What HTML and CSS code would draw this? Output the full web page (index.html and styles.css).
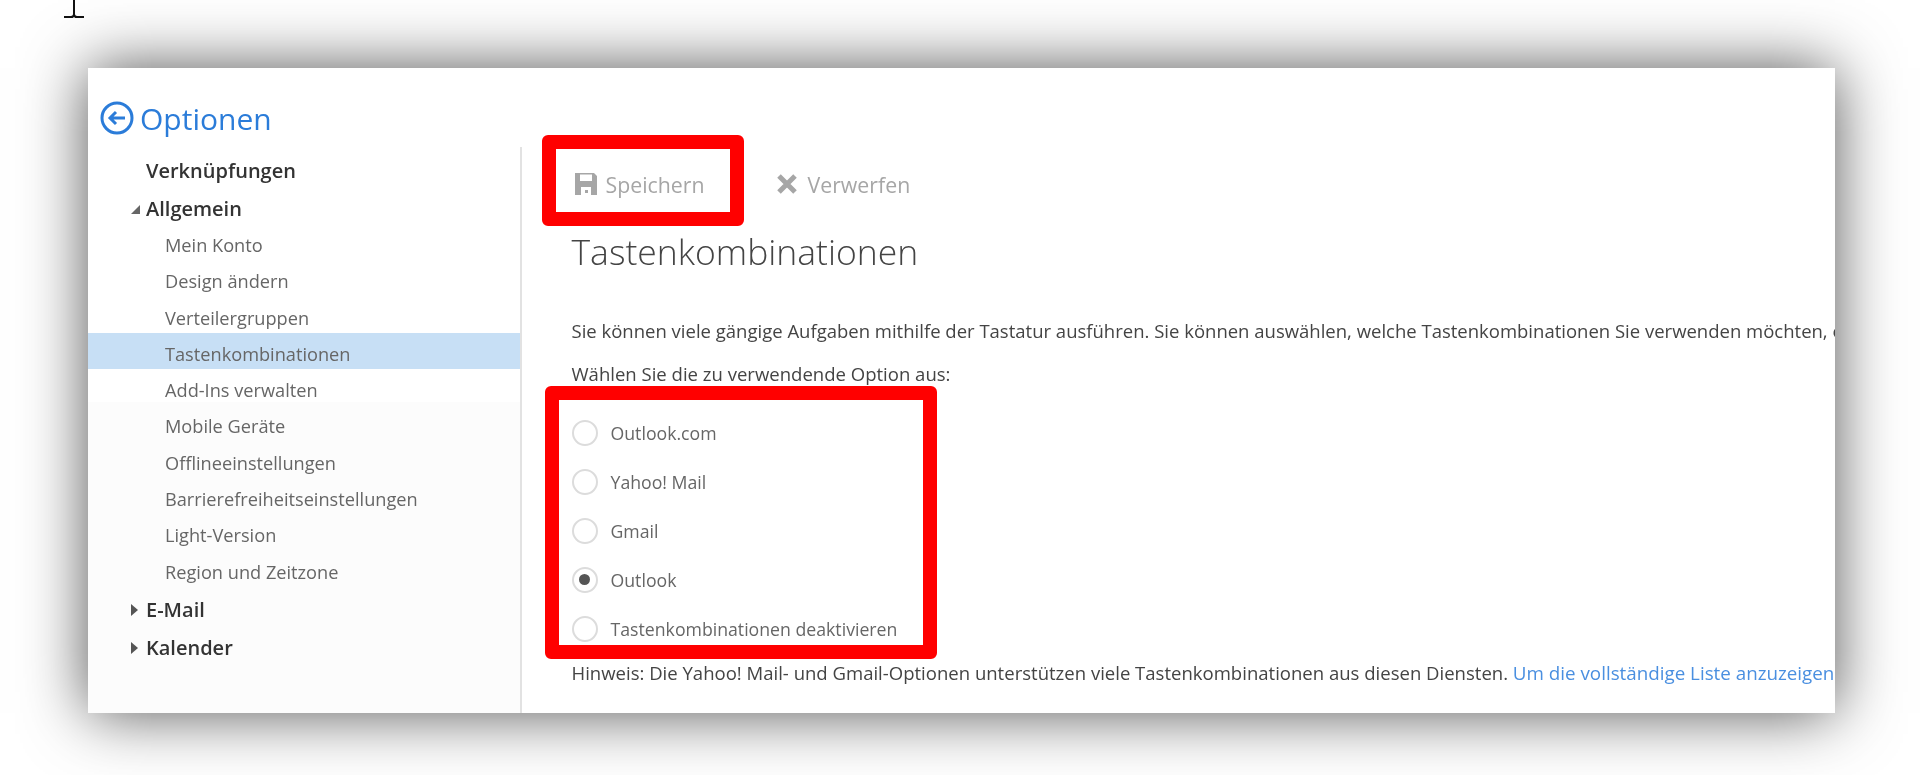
FILE: index.html
```html
<!DOCTYPE html>
<html lang="de">
<head>
  <meta charset="UTF-8">
  <title>Optionen</title>
  <link rel="stylesheet" href="styles.css">
</head>
<body>
  <svg class="text-cursor" width="22" height="20" viewBox="0 0 22 20">
    <path d="M10 0v14c0 1-1 2-2 2H1v2h8c1 0 1.500-.5 2-1 .5.500 1 1 2 1h8v-2h-7c-1 0-2-1-2-2V0z" fill="#111"/>
  </svg>

  <div class="window">
    <div class="window-head">
      <svg class="back-icon" width="34" height="34" viewBox="0 0 34 34" fill="none" stroke="#2b7cd9">
        <circle cx="17" cy="17" r="15" stroke-width="3"/>
        <path d="M25 17H10M16 11l-6 6 6 6" stroke-width="3"/>
      </svg>
      <h1>Optionen</h1>
    </div>

    <div class="window-body">
      <nav class="sidebar">
        <div class="nav-top">Verknüpfungen</div>
        <div class="nav-top"><span class="arrow-open"></span>Allgemein</div>
        <div class="nav-group">
          <div class="nav-sub">Mein Konto</div>
          <div class="nav-sub">Design ändern</div>
          <div class="nav-sub">Verteilergruppen</div>
          <div class="nav-sub active">Tastenkombinationen</div>
          <div class="nav-sub">Add-Ins verwalten</div>
          <div class="nav-sub">Mobile Geräte</div>
          <div class="nav-sub">Offlineeinstellungen</div>
          <div class="nav-sub">Barrierefreiheitseinstellungen</div>
          <div class="nav-sub">Light-Version</div>
          <div class="nav-sub">Region und Zeitzone</div>
        </div>
        <div class="nav-top"><span class="arrow-closed"></span>E-Mail</div>
        <div class="nav-top"><span class="arrow-closed"></span>Kalender</div>
      </nav>

      <main class="content">
        <div class="toolbar">
          <div class="tool tool-save">
            <svg width="24" height="24" viewBox="0 0 24 24">
              <path d="M1 1h19l3 3v19H1zM6 2.500V9h12V2.500zM7 15v8h10v-8zM11 18h3v3h-3z" fill="#a6a6a6" fill-rule="evenodd"/>
            </svg>
            Speichern
          </div>
          <div class="tool tool-discard">
            <svg width="22" height="22" viewBox="0 0 22 22">
              <path d="M3 3l16 16M19 3L3 19" stroke="#a6a6a6" stroke-width="5"/>
            </svg>
            Verwerfen
          </div>
        </div>

        <h2>Tastenkombinationen</h2>
        <p class="intro">Sie können viele gängige Aufgaben mithilfe der Tastatur ausführen. Sie können auswählen, welche Tastenkombinationen Sie verwenden möchten, oder die Tastenkombinationen deaktivieren.</p>
        <p class="choose">Wählen Sie die zu verwendende Option aus:</p>

        <div class="options">
          <div class="option"><span class="radio"></span>Outlook.com</div>
          <div class="option"><span class="radio"></span>Yahoo! Mail</div>
          <div class="option"><span class="radio"></span>Gmail</div>
          <div class="option"><span class="radio checked"></span>Outlook</div>
          <div class="option"><span class="radio"></span>Tastenkombinationen deaktivieren</div>
        </div>

        <p class="hint">Hinweis: Die Yahoo! Mail- und Gmail-Optionen unterstützen viele Tastenkombinationen aus diesen Diensten. <a href="#">Um die vollständige Liste anzuzeigen</a></p>
      </main>
    </div>
  </div>

  <div class="mark mark-save"></div>
  <div class="mark mark-options"></div>
</body>
</html>
```

FILE: styles.css
```css
html, body {
  height: 100%;
}

body {
  margin: 0;
  background: #fff;
  font-family: "Open Sans", "Noto Sans", sans-serif;
  overflow: hidden;
}

.text-cursor {
  position: absolute;
  left: 63px;
  top: 0;
  filter: blur(0.4px);
}

.window {
  display: flex;
  flex-direction: column;
  margin: 68px 0 0 88px;
  width: 1747px;
  height: 645px;
  background: #fff;
  box-shadow: 0 0 60px rgba(0, 0, 0, 0.68);
  overflow: hidden;
}

.window-head {
  display: flex;
  align-items: center;
  gap: 6px;
  height: 79px;
  padding: 21px 0 0 12px;
  box-sizing: border-box;
  filter: blur(0.4px);
}

.window-head h1 {
  margin: 0;
  font-size: 30px;
  font-weight: 400;
  color: #2b7cd9;
}

.window-body {
  display: flex;
  flex: 1;
  min-height: 0;
}

.sidebar {
  width: 433.500px;
  flex-shrink: 0;
  padding-top: 5px;
  box-sizing: border-box;
  border-right: 2px solid #e2e2e2;
  background: linear-gradient(#fff, #fff 45%, #fcfcfc 45%);
  overflow: hidden;
}

.nav-top {
  position: relative;
  height: 38px;
  line-height: 38px;
  padding-left: 58px;
  font-size: 20px;
  font-weight: 600;
  color: #333;
  filter: blur(0.4px);
}

.nav-group {
  margin: -4px 0 4px;
}

.nav-sub {
  height: 36.300px;
  box-sizing: border-box;
  padding: 3px 0 0 77px;
  line-height: 36px;
  font-size: 18.200px;
  color: #666;
  filter: blur(0.4px);
}

.nav-sub.active {
  background: #c7dff5;
}

.arrow-open {
  position: absolute;
  left: 43px;
  top: 15px;
  border-style: solid;
  border-width: 0 0 9px 9px;
  border-color: transparent transparent #666 transparent;
}

.arrow-closed {
  position: absolute;
  left: 43px;
  top: 13px;
  border-style: solid;
  border-width: 6px 0 6px 7px;
  border-color: transparent transparent transparent #555;
}

.content {
  flex: 1;
  min-width: 0;
  padding-left: 50px;
  overflow: hidden;
  white-space: nowrap;
  font-size: 18.550px;
  color: #444;
  filter: blur(0.4px);
}

.toolbar {
  display: flex;
  align-items: center;
  height: 74px;
}

.tool {
  display: flex;
  align-items: center;
  font-size: 21.300px;
  color: #a6a6a6;
}

.tool-save {
  gap: 8px;
  width: 202px;
  padding-left: 2px;
}

.tool-discard {
  gap: 10px;
}

.content h2 {
  margin: 0;
  height: 60px;
  line-height: 60px;
  font-size: 35.500px;
  font-weight: 300;
  color: #444;
}

.intro,
.choose,
.hint {
  margin: 0;
  height: 36px;
  line-height: 36px;
}

.intro {
  margin-top: 32px;
  font-size: 18.500px;
}

.choose {
  margin-top: 7px;
}

.options {
  margin-top: 16px;
}

.option {
  display: flex;
  align-items: center;
  gap: 13px;
  height: 49px;
  font-size: 17.700px;
  color: #666;
}

.radio {
  display: flex;
  align-items: center;
  justify-content: center;
  width: 26px;
  height: 26px;
  box-sizing: border-box;
  border: 2px solid #dcdcdc;
  border-radius: 50%;
}

.radio.checked::after {
  content: "";
  width: 11px;
  height: 11px;
  border-radius: 50%;
  background: #555;
}

.hint {
  margin-top: 2px;
}

.hint a {
  font-size: 18.800px;
  color: #4a8fe0;
  text-decoration: none;
}

/* red marks drawn over the screenshot */
.mark {
  position: absolute;
  box-sizing: border-box;
  border: 14px solid #f00;
  border-radius: 6px;
}

.mark-save {
  left: 542px;
  top: 135px;
  width: 202px;
  height: 91px;
}

.mark-options {
  left: 545px;
  top: 386px;
  width: 392px;
  height: 273px;
}
```
